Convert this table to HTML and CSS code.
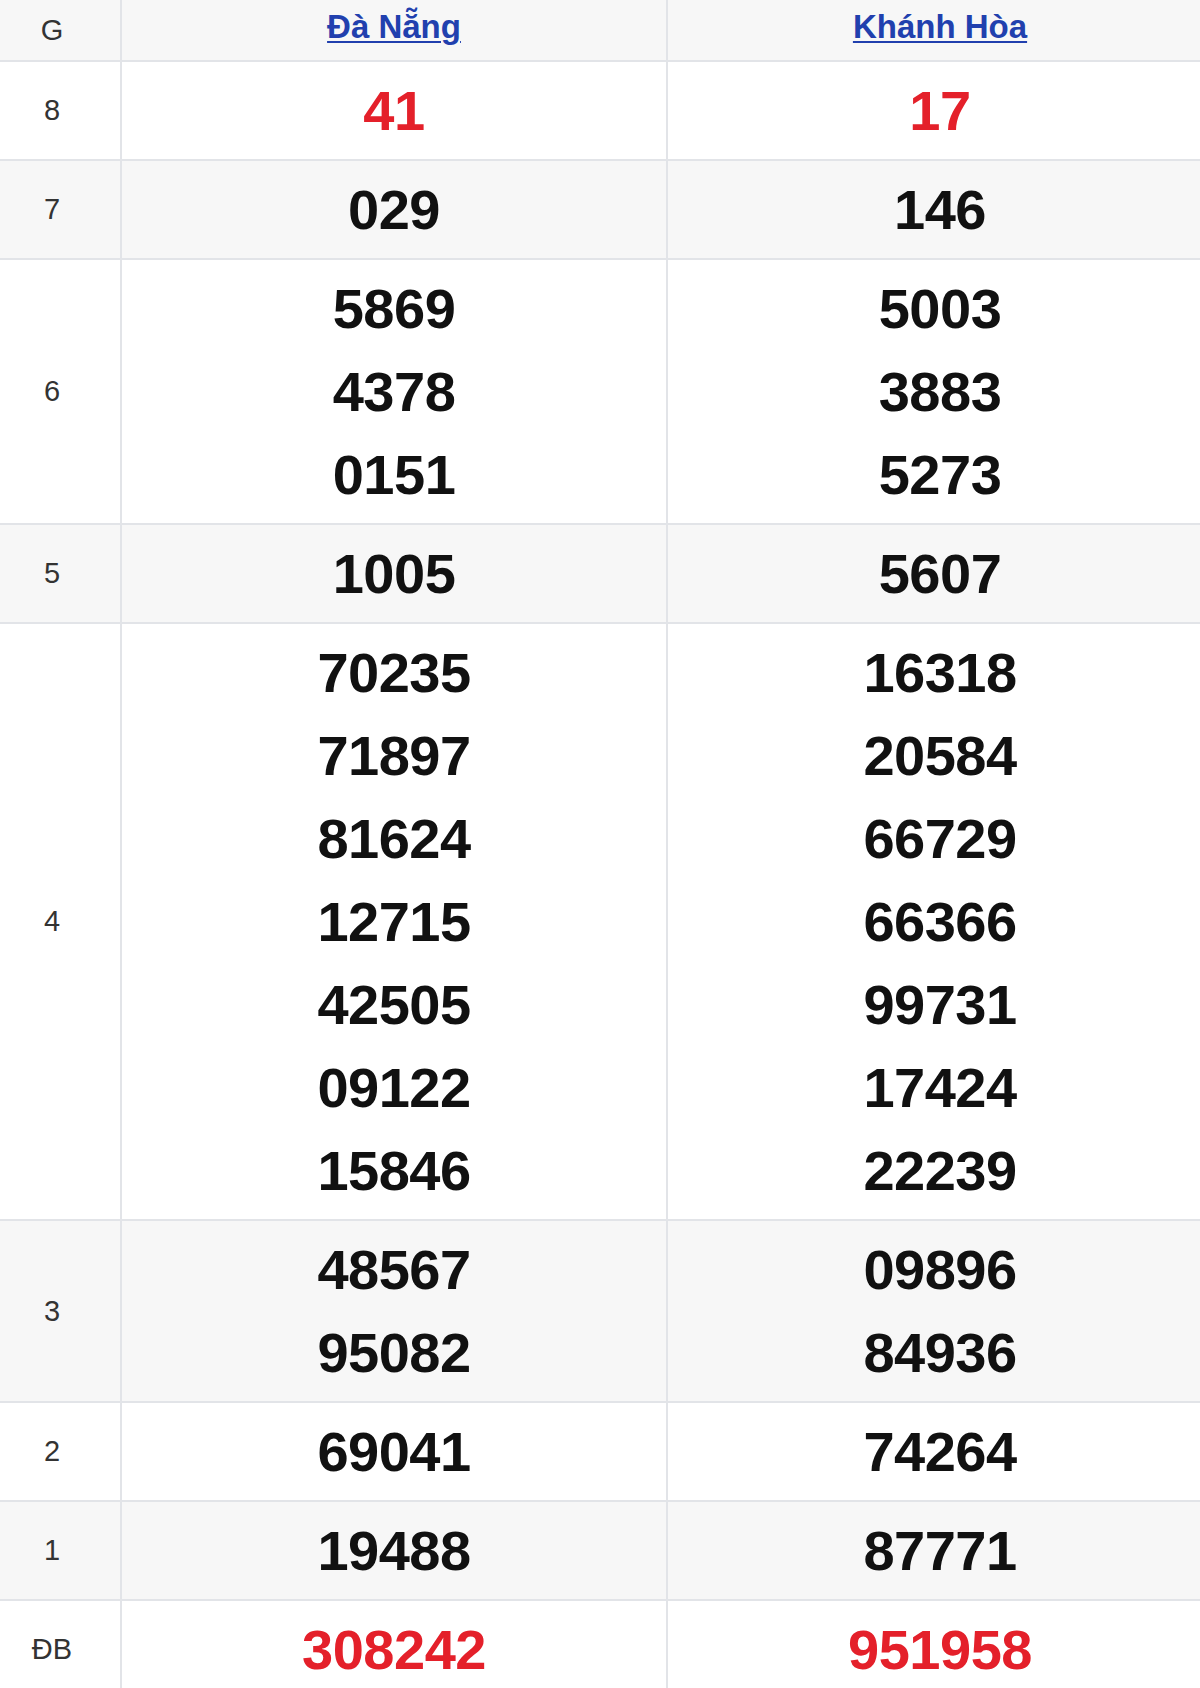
FILE: index.html
```html
<!DOCTYPE html>
<html lang="vi">
<head>
<meta charset="utf-8">
<title>Kết quả xổ số</title>
<link rel="stylesheet" href="styles.css">
</head>
<body>
<table class="kq">
  <colgroup>
    <col class="c-label">
    <col class="c-prov">
    <col class="c-prov">
  </colgroup>
  <thead>
    <tr class="head">
      <th class="label">G</th>
      <th class="prov"><a href="#">Đà Nẵng</a></th>
      <th class="prov"><a href="#">Khánh Hòa</a></th>
    </tr>
  </thead>
  <tbody>
    <tr>
      <td class="label">8</td>
      <td class="num red">41</td>
      <td class="num red">17</td>
    </tr>
    <tr class="alt">
      <td class="label">7</td>
      <td class="num">029</td>
      <td class="num">146</td>
    </tr>
    <tr>
      <td class="label">6</td>
      <td class="num"><div>5869</div><div>4378</div><div>0151</div></td>
      <td class="num"><div>5003</div><div>3883</div><div>5273</div></td>
    </tr>
    <tr class="alt">
      <td class="label">5</td>
      <td class="num">1005</td>
      <td class="num">5607</td>
    </tr>
    <tr>
      <td class="label">4</td>
      <td class="num"><div>70235</div><div>71897</div><div>81624</div><div>12715</div><div>42505</div><div>09122</div><div>15846</div></td>
      <td class="num"><div>16318</div><div>20584</div><div>66729</div><div>66366</div><div>99731</div><div>17424</div><div>22239</div></td>
    </tr>
    <tr class="alt">
      <td class="label">3</td>
      <td class="num"><div>48567</div><div>95082</div></td>
      <td class="num"><div>09896</div><div>84936</div></td>
    </tr>
    <tr>
      <td class="label">2</td>
      <td class="num">69041</td>
      <td class="num">74264</td>
    </tr>
    <tr class="alt">
      <td class="label">1</td>
      <td class="num">19488</td>
      <td class="num">87771</td>
    </tr>
    <tr>
      <td class="label">ĐB</td>
      <td class="num red">308242</td>
      <td class="num red">951958</td>
    </tr>
  </tbody>
</table>
</body>
</html>
```
FILE: styles.css
```css
html, body {
  margin: 0;
  padding: 0;
  background: #ffffff;
  overflow: hidden;
}

body {
  font-family: "Liberation Sans", Arial, sans-serif;
  color: #111;
}

.kq {
  border-collapse: collapse;
  table-layout: fixed;
  width: 1230px;
  margin-left: -18px;
}

.c-label { width: 138px; }
.c-prov { width: 546px; }

.kq th,
.kq td {
  border: 2px solid #e2e4e8;
  text-align: center;
  vertical-align: middle;
  padding: 0;
}

.head th {
  border-top: 0;
  background: #f7f7f7;
  height: 60px;
  font-weight: bold;
  font-size: 33px;
  line-height: 40px;
}

.head th.prov {
  padding-bottom: 6px;
  height: 54px;
}

.head th a {
  color: #2140ae;
  text-decoration: underline;
  text-underline-offset: 3px;
  text-decoration-thickness: 2px;
}

.head th.label {
  font-weight: normal;
  font-size: 29px;
  color: #333;
}

.kq tr.alt td {
  background: #f7f7f7;
}

.kq td.label {
  font-size: 29px;
  color: #333;
}

.kq td.num {
  font-size: 56px;
  font-weight: bold;
  line-height: 83px;
  padding: 7px 0;
  color: #111;
  letter-spacing: -0.5px;
}

.kq td.num.red {
  color: #e4202a;
}
```
